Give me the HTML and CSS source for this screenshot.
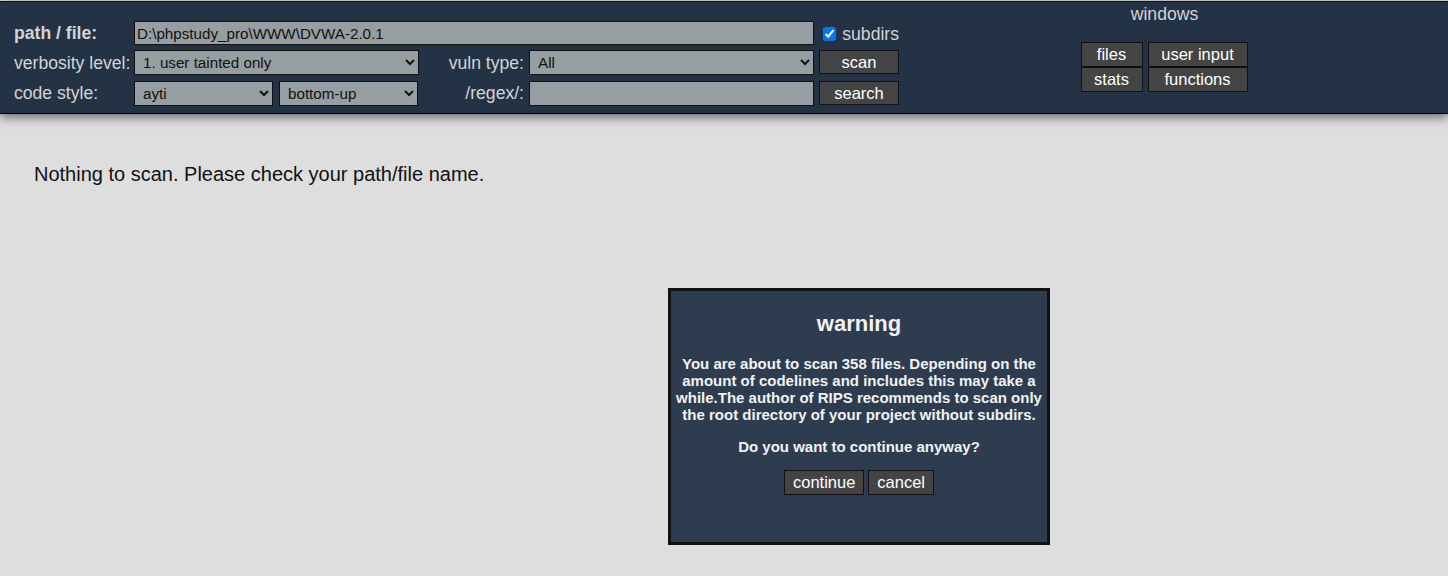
FILE: index.html
```html
<!DOCTYPE html>
<html>
<head>
<meta charset="utf-8">
<title>RIPS</title>
<link rel="stylesheet" href="styles.css">
</head>
<body>
<header class="menu">
  <form class="controls">
    <label class="lbl strong">path / file:</label>
    <input class="field path" type="text" value="D:\phpstudy_pro\WWW\DVWA-2.0.1">
    <label class="subdirs"><input type="checkbox" checked> subdirs</label>

    <label class="lbl">verbosity level:</label>
    <select class="field sel-verb"><option>1. user tainted only</option></select>
    <label class="lbl right">vuln type:</label>
    <select class="field sel-vuln"><option>All</option></select>
    <button type="button" class="btn action">scan</button>

    <label class="lbl">code style:</label>
    <div class="pair">
      <select class="field"><option>ayti</option></select>
      <select class="field"><option>bottom-up</option></select>
    </div>
    <label class="lbl right">/regex/:</label>
    <input class="field regex" type="text" value="">
    <button type="button" class="btn action">search</button>
  </form>
  <div class="windows">
    <div class="win-title">windows</div>
    <div class="win-grid">
      <button type="button" class="btn win">files</button>
      <button type="button" class="btn win">user input</button>
      <button type="button" class="btn win">stats</button>
      <button type="button" class="btn win">functions</button>
    </div>
  </div>
</header>
<main class="content">
  <p class="msg">Nothing to scan. Please check your path/file name.</p>
</main>
<div class="dialog">
  <h2 class="dlg-title">warning</h2>
  <p class="dlg-text">You are about to scan 358 files. Depending on the amount of codelines and includes this may take a while.The author of RIPS recommends to scan only the root directory of your project without subdirs.</p>
  <p class="dlg-q">Do you want to continue anyway?</p>
  <div class="dlg-btns">
    <button type="button" class="btn dlg">continue</button>
    <button type="button" class="btn dlg">cancel</button>
  </div>
</div>
</body>
</html>
```
FILE: styles.css
```css
html, body {
  margin: 0;
  padding: 0;
}
body {
  background: #dedede;
  font-family: "Liberation Sans", Arial, sans-serif;
  height: 576px;
  overflow: hidden;
  position: relative;
}
.menu {
  margin-top: 1px;
  height: 111px;
  background: #233345;
  border-top: 1px solid #111;
  border-bottom: 1px solid #000;
  box-shadow: 0 3px 10px rgba(0, 0, 0, 0.55);
  display: flex;
  position: relative;
  z-index: 1;
}
.controls {
  margin: 19px 0 0 14px;
  display: grid;
  grid-template-columns: 120px 285px 110px 285px 5px 80px;
  grid-template-rows: 24px 26px 25px;
  row-gap: 5px;
  align-items: center;
  width: 904px;
  height: 85px;
}
.lbl {
  color: #d4d4d4;
  font-size: 17.6px;
  white-space: nowrap;
}
.lbl.strong {
  font-weight: bold;
}
.lbl.right {
  text-align: right;
  padding-right: 5px;
}
.field {
  box-sizing: border-box;
  height: 100%;
  background: #979ea2;
  border: 1px solid #111;
  border-radius: 0;
  color: #111;
  font-family: "Liberation Sans", Arial, sans-serif;
  font-size: 15.2px;
  margin: 0;
  padding: 0 2px;
}
select.field {
  padding: 0 4px;
}
.path {
  grid-column: 2 / 5;
  height: 24px;
}
.subdirs {
  grid-column: 5 / 7;
  color: #d4d4d4;
  font-size: 17.6px;
  padding-left: 9px;
  white-space: nowrap;
  display: flex;
  align-items: center;
  margin-top: 2px;
}
.subdirs input {
  margin: 0 6px 0 0;
  width: 14px;
  height: 14px;
}
.sel-verb, .sel-vuln {
  height: 25px;
  align-self: start;
}
.regex {
  height: 25px;
}
.pair {
  display: flex;
  gap: 6px;
  height: 25px;
}
.pair .field {
  width: 139px;
  height: 25px;
}
.btn {
  background: #444;
  border: 1px solid #111;
  border-radius: 0;
  color: #fff;
  font-family: "Liberation Sans", Arial, sans-serif;
  font-size: 16.5px;
  padding: 0;
  margin: 0;
}
.action {
  grid-column: 6;
  height: 24px;
  align-self: start;
  margin-top: 0;
}
.windows {
  margin-left: 162px;
  width: 168px;
  display: flex;
  flex-direction: column;
  align-items: center;
}
.win-title {
  color: #d4d4d4;
  font-size: 17.6px;
  margin-top: 2px;
  margin-left: 1px;
}
.win-grid {
  margin-top: 17px;
  display: grid;
  grid-template-columns: 62px 100px;
  column-gap: 5px;
  row-gap: 0;
}
.win {
  height: 25px;
}
.content {
  padding: 49px 34px 0;
}
.msg {
  margin: 0;
  font-size: 20px;
  color: #111;
}
.dialog {
  position: absolute;
  left: 668px;
  top: 288px;
  width: 376px;
  height: 251px;
  background: #2e3c4f;
  border: 3px solid #111;
  color: #f2f2f2;
  text-align: center;
  font-weight: bold;
}
.dlg-title {
  margin: 20px 0 0;
  font-size: 22px;
  line-height: 26px;
}
.dlg-text {
  margin: 18px 2px 0;
  font-size: 15px;
  line-height: 17px;
}
.dlg-q {
  margin: 15px 0 0;
  font-size: 15px;
  line-height: 17px;
}
.dlg-btns {
  margin-top: 15px;
  display: flex;
  justify-content: center;
  gap: 4px;
}
.dlg {
  height: 25px;
  font-weight: normal;
  padding: 0 8px;
}
```
